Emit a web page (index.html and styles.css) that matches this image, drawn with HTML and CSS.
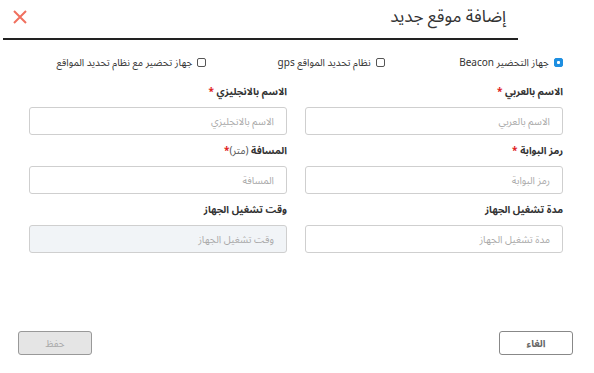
FILE: index.html
```html
<!DOCTYPE html>
<html lang="ar" dir="rtl">
<head>
<meta charset="utf-8">
<link rel="stylesheet" href="styles.css">
</head>
<body>
<div class="modal">
  <div class="header">
    <h1 class="title">إضافة موقع جديد</h1>
    <span class="close" aria-label="close">
      <svg width="16" height="16" viewBox="0 0 16 16"><path d="M2 2 L14 14 M14 2 L2 14" stroke="#f0705f" stroke-width="2" fill="none"/></svg>
    </span>
  </div>

  <div class="options">
    <label class="opt"><span class="box checked"></span><span>جهاز التحضير Beacon</span></label>
    <label class="opt"><span class="box"></span><span>نظام تحديد المواقع gps</span></label>
    <label class="opt"><span class="box"></span><span>جهاز تحضير مع نظام تحديد المواقع</span></label>
  </div>

  <div class="form">
    <div class="field">
      <div class="label">الاسم بالعربي <span class="req">*</span></div>
      <div class="input">الاسم بالعربي</div>
    </div>
    <div class="field">
      <div class="label">الاسم بالانجليزي <span class="req">*</span></div>
      <div class="input">الاسم بالانجليزي</div>
    </div>
    <div class="field">
      <div class="label">رمز البوابة <span class="req">*</span></div>
      <div class="input">رمز البوابة</div>
    </div>
    <div class="field">
      <div class="label">المسافة <span class="light">(متر)</span><span class="req">*</span></div>
      <div class="input">المسافة</div>
    </div>
    <div class="field">
      <div class="label">مدة تشغيل الجهاز</div>
      <div class="input">مدة تشغيل الجهاز</div>
    </div>
    <div class="field">
      <div class="label">وقت تشغيل الجهاز</div>
      <div class="input disabled">وقت تشغيل الجهاز</div>
    </div>
  </div>

  <div class="footer">
    <button class="btn cancel">الغاء</button>
    <button class="btn save">حفظ</button>
  </div>
</div>
</body>
</html>
```

FILE: styles.css
```css
* { box-sizing: border-box; }
html, body { margin: 0; padding: 0; background: #fff; }
body {
  font-family: "Noto Sans Arabic", "Noto Sans", "DejaVu Sans", sans-serif;
  color: #333;
  width: 594px;
  height: 373px;
  overflow: hidden;
}
.modal { position: relative; height: 373px; }
.header {
  margin-right: 76px;
  margin-left: 3px;
  height: 40px;
  border-bottom: 2px solid #222;
  display: flex;
  align-items: center;
  justify-content: space-between;
  padding: 0 12px 4px 9px;
}
.title {
  margin: 0;
  font-size: 17px;
  font-weight: normal;
  color: #333;
}
.close { display: flex; width: 16px; height: 16px; }
.options {
  display: grid;
  grid-template-columns: repeat(3, 1fr);
  margin: 12px 31px 0 28px;
  height: 16px;
}
.opt {
  display: flex;
  align-items: center;
  gap: 5px;
  font-size: 10px;
  color: #333;
}
.box {
  width: 9px;
  height: 9px;
  border: 1px solid #555;
  border-radius: 2px;
  flex: none;
}
.box.checked {
  background: #1e8fe1;
  border-color: #1e8fe1;
  display: flex;
  align-items: center;
  justify-content: center;
}
.box.checked::after {
  content: "";
  width: 3px;
  height: 3px;
  background: #fff;
  border-radius: 1px;
}
.form {
  display: grid;
  grid-template-columns: 258px 258px;
  column-gap: 18px;
  row-gap: 8px;
  margin: 16px 31px 0 29px;
}
.field { display: flex; flex-direction: column; }
.label {
  font-size: 10px;
  font-weight: bold;
  line-height: 16px;
  height: 16px;
  margin-bottom: 7px;
  color: #333;
}
.label .light { font-weight: normal; color: #555; }
.req { color: #e02020; }
.input {
  height: 28px;
  border: 1px solid #cfcfcf;
  border-radius: 3px;
  padding: 0 12px;
  display: flex;
  align-items: center;
  font-size: 10px;
  color: #aaa;
  background: #fff;
}
.input.disabled { background: #f1f4f7; }
.footer {
  position: absolute;
  top: 331px;
  left: 18px;
  right: 21px;
  display: flex;
  justify-content: space-between;
}
.btn {
  width: 74px;
  height: 24px;
  border-radius: 3px;
  font-family: inherit;
  font-size: 10px;
  font-weight: bold;
  padding: 0;
}
.cancel { background: #fff; border: 1px solid #888; color: #666; }
.save { background: #e5e5e5; border: 1px solid #999; color: #aaa; font-weight: normal; }
```
